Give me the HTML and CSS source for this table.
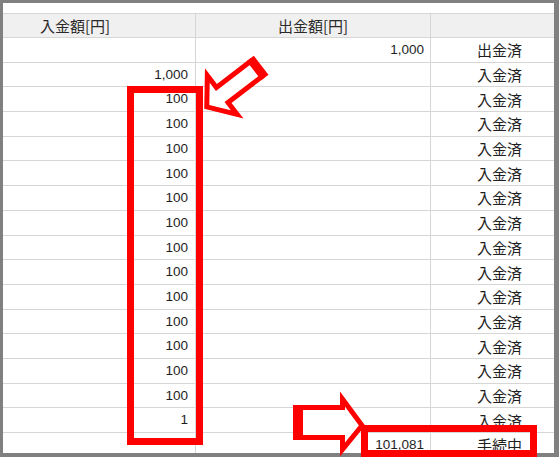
FILE: index.html
```html
<!DOCTYPE html>
<html lang="ja">
<head>
<meta charset="utf-8">
<link rel="stylesheet" href="styles.css">
</head>
<body>
<div class="frame">
  <div class="panel">
    <div class="row head">
      <div class="cell c1 hc1"><span>入金額[円]</span></div>
      <div class="cell c2 hc"><span>出金額[円]</span></div>
      <div class="cell c3"></div>
    </div>
    <div class="row"><div class="cell c1 num"></div><div class="cell c2 num"><span>1,000</span></div><div class="cell c3 st"><span>出金済</span></div></div>
    <div class="row"><div class="cell c1 num"><span>1,000</span></div><div class="cell c2 num"></div><div class="cell c3 st"><span>入金済</span></div></div>
    <div class="row"><div class="cell c1 num"><span>100</span></div><div class="cell c2 num"></div><div class="cell c3 st"><span>入金済</span></div></div>
    <div class="row"><div class="cell c1 num"><span>100</span></div><div class="cell c2 num"></div><div class="cell c3 st"><span>入金済</span></div></div>
    <div class="row"><div class="cell c1 num"><span>100</span></div><div class="cell c2 num"></div><div class="cell c3 st"><span>入金済</span></div></div>
    <div class="row"><div class="cell c1 num"><span>100</span></div><div class="cell c2 num"></div><div class="cell c3 st"><span>入金済</span></div></div>
    <div class="row"><div class="cell c1 num"><span>100</span></div><div class="cell c2 num"></div><div class="cell c3 st"><span>入金済</span></div></div>
    <div class="row"><div class="cell c1 num"><span>100</span></div><div class="cell c2 num"></div><div class="cell c3 st"><span>入金済</span></div></div>
    <div class="row"><div class="cell c1 num"><span>100</span></div><div class="cell c2 num"></div><div class="cell c3 st"><span>入金済</span></div></div>
    <div class="row"><div class="cell c1 num"><span>100</span></div><div class="cell c2 num"></div><div class="cell c3 st"><span>入金済</span></div></div>
    <div class="row"><div class="cell c1 num"><span>100</span></div><div class="cell c2 num"></div><div class="cell c3 st"><span>入金済</span></div></div>
    <div class="row"><div class="cell c1 num"><span>100</span></div><div class="cell c2 num"></div><div class="cell c3 st"><span>入金済</span></div></div>
    <div class="row"><div class="cell c1 num"><span>100</span></div><div class="cell c2 num"></div><div class="cell c3 st"><span>入金済</span></div></div>
    <div class="row"><div class="cell c1 num"><span>100</span></div><div class="cell c2 num"></div><div class="cell c3 st"><span>入金済</span></div></div>
    <div class="row"><div class="cell c1 num"><span>100</span></div><div class="cell c2 num"></div><div class="cell c3 st"><span>入金済</span></div></div>
    <div class="row"><div class="cell c1 num"><span>1</span></div><div class="cell c2 num"></div><div class="cell c3 st"><span>入金済</span></div></div>
    <div class="row"><div class="cell c1 num"></div><div class="cell c2 num"><span>101,081</span></div><div class="cell c3 st"><span>手続中</span></div></div>
  </div>
</div>
<svg class="marks" width="559" height="457" viewBox="0 0 559 457">
  <rect x="130.5" y="89.5" width="69" height="352" fill="none" stroke="#ff0000" stroke-width="7"/>
  <g transform="translate(204 109) rotate(-37.5)">
    <polygon points="3.5,0 23,-24.5 23,-9.5 66,-9.5 66,9.5 23,9.5 23,24.5" fill="#ffffff" stroke="#ff0000" stroke-width="5"/>
    <rect x="63" y="-12" width="9" height="24" fill="#ff0000"/>
  </g>
  <polygon points="298,407.5 342.5,407.5 342.5,399 362,425.5 342.5,449.5 342.5,437.5 298,437.5" fill="#ffffff" stroke="#ff0000" stroke-width="5"/>
  <rect x="293" y="405" width="10" height="35" fill="#ff0000"/>
  <rect x="364.5" y="428.5" width="169" height="25" fill="none" stroke="#ff0000" stroke-width="7"/>
</svg>
</body>
</html>
```

FILE: styles.css
```css
html, body {
  margin: 0;
  padding: 0;
}
body {
  position: relative;
  width: 559px;
  height: 457px;
  overflow: hidden;
  background: #808080;
  color: #1e1e1e;
  font-family: "Noto Sans CJK JP", "DejaVu Sans", sans-serif;
}
.frame {
  box-sizing: border-box;
  width: 559px;
  height: 457px;
  padding: 3px 5px 4px 3px;
}
.panel {
  box-sizing: border-box;
  height: 100%;
  background: #ffffff;
  overflow: hidden;
  padding-top: 10px;
}
.row {
  display: grid;
  grid-template-columns: 193px 235px 1fr;
  box-sizing: border-box;
  height: 24.69px;
  border-bottom: 1px solid #d6d6d6;
}
.row.head {
  height: 25px;
  border-top: 1px solid #d6d6d6;
  background: #f0f0f0;
}
.cell {
  box-sizing: border-box;
  display: flex;
  align-items: center;
  min-width: 0;
  white-space: nowrap;
}
.cell span {
  line-height: 1;
}
.c1, .c2 {
  border-right: 1px solid #d6d6d6;
}
.hc1 {
  justify-content: center;
  padding-right: 48px;
  font-size: 15px;
  color: #2a2a2a;
}
.hc {
  justify-content: center;
  font-size: 15px;
  color: #2a2a2a;
}
.num {
  justify-content: flex-end;
  font-family: "Liberation Sans", Arial, sans-serif;
  font-size: 13.5px;
}
.c1.num {
  padding-right: 7px;
}
.c2.num {
  padding-right: 6px;
}
.st {
  justify-content: flex-end;
  padding-right: 32px;
  font-size: 15px;
}
.marks {
  position: absolute;
  left: 0;
  top: 0;
  pointer-events: none;
}
```
